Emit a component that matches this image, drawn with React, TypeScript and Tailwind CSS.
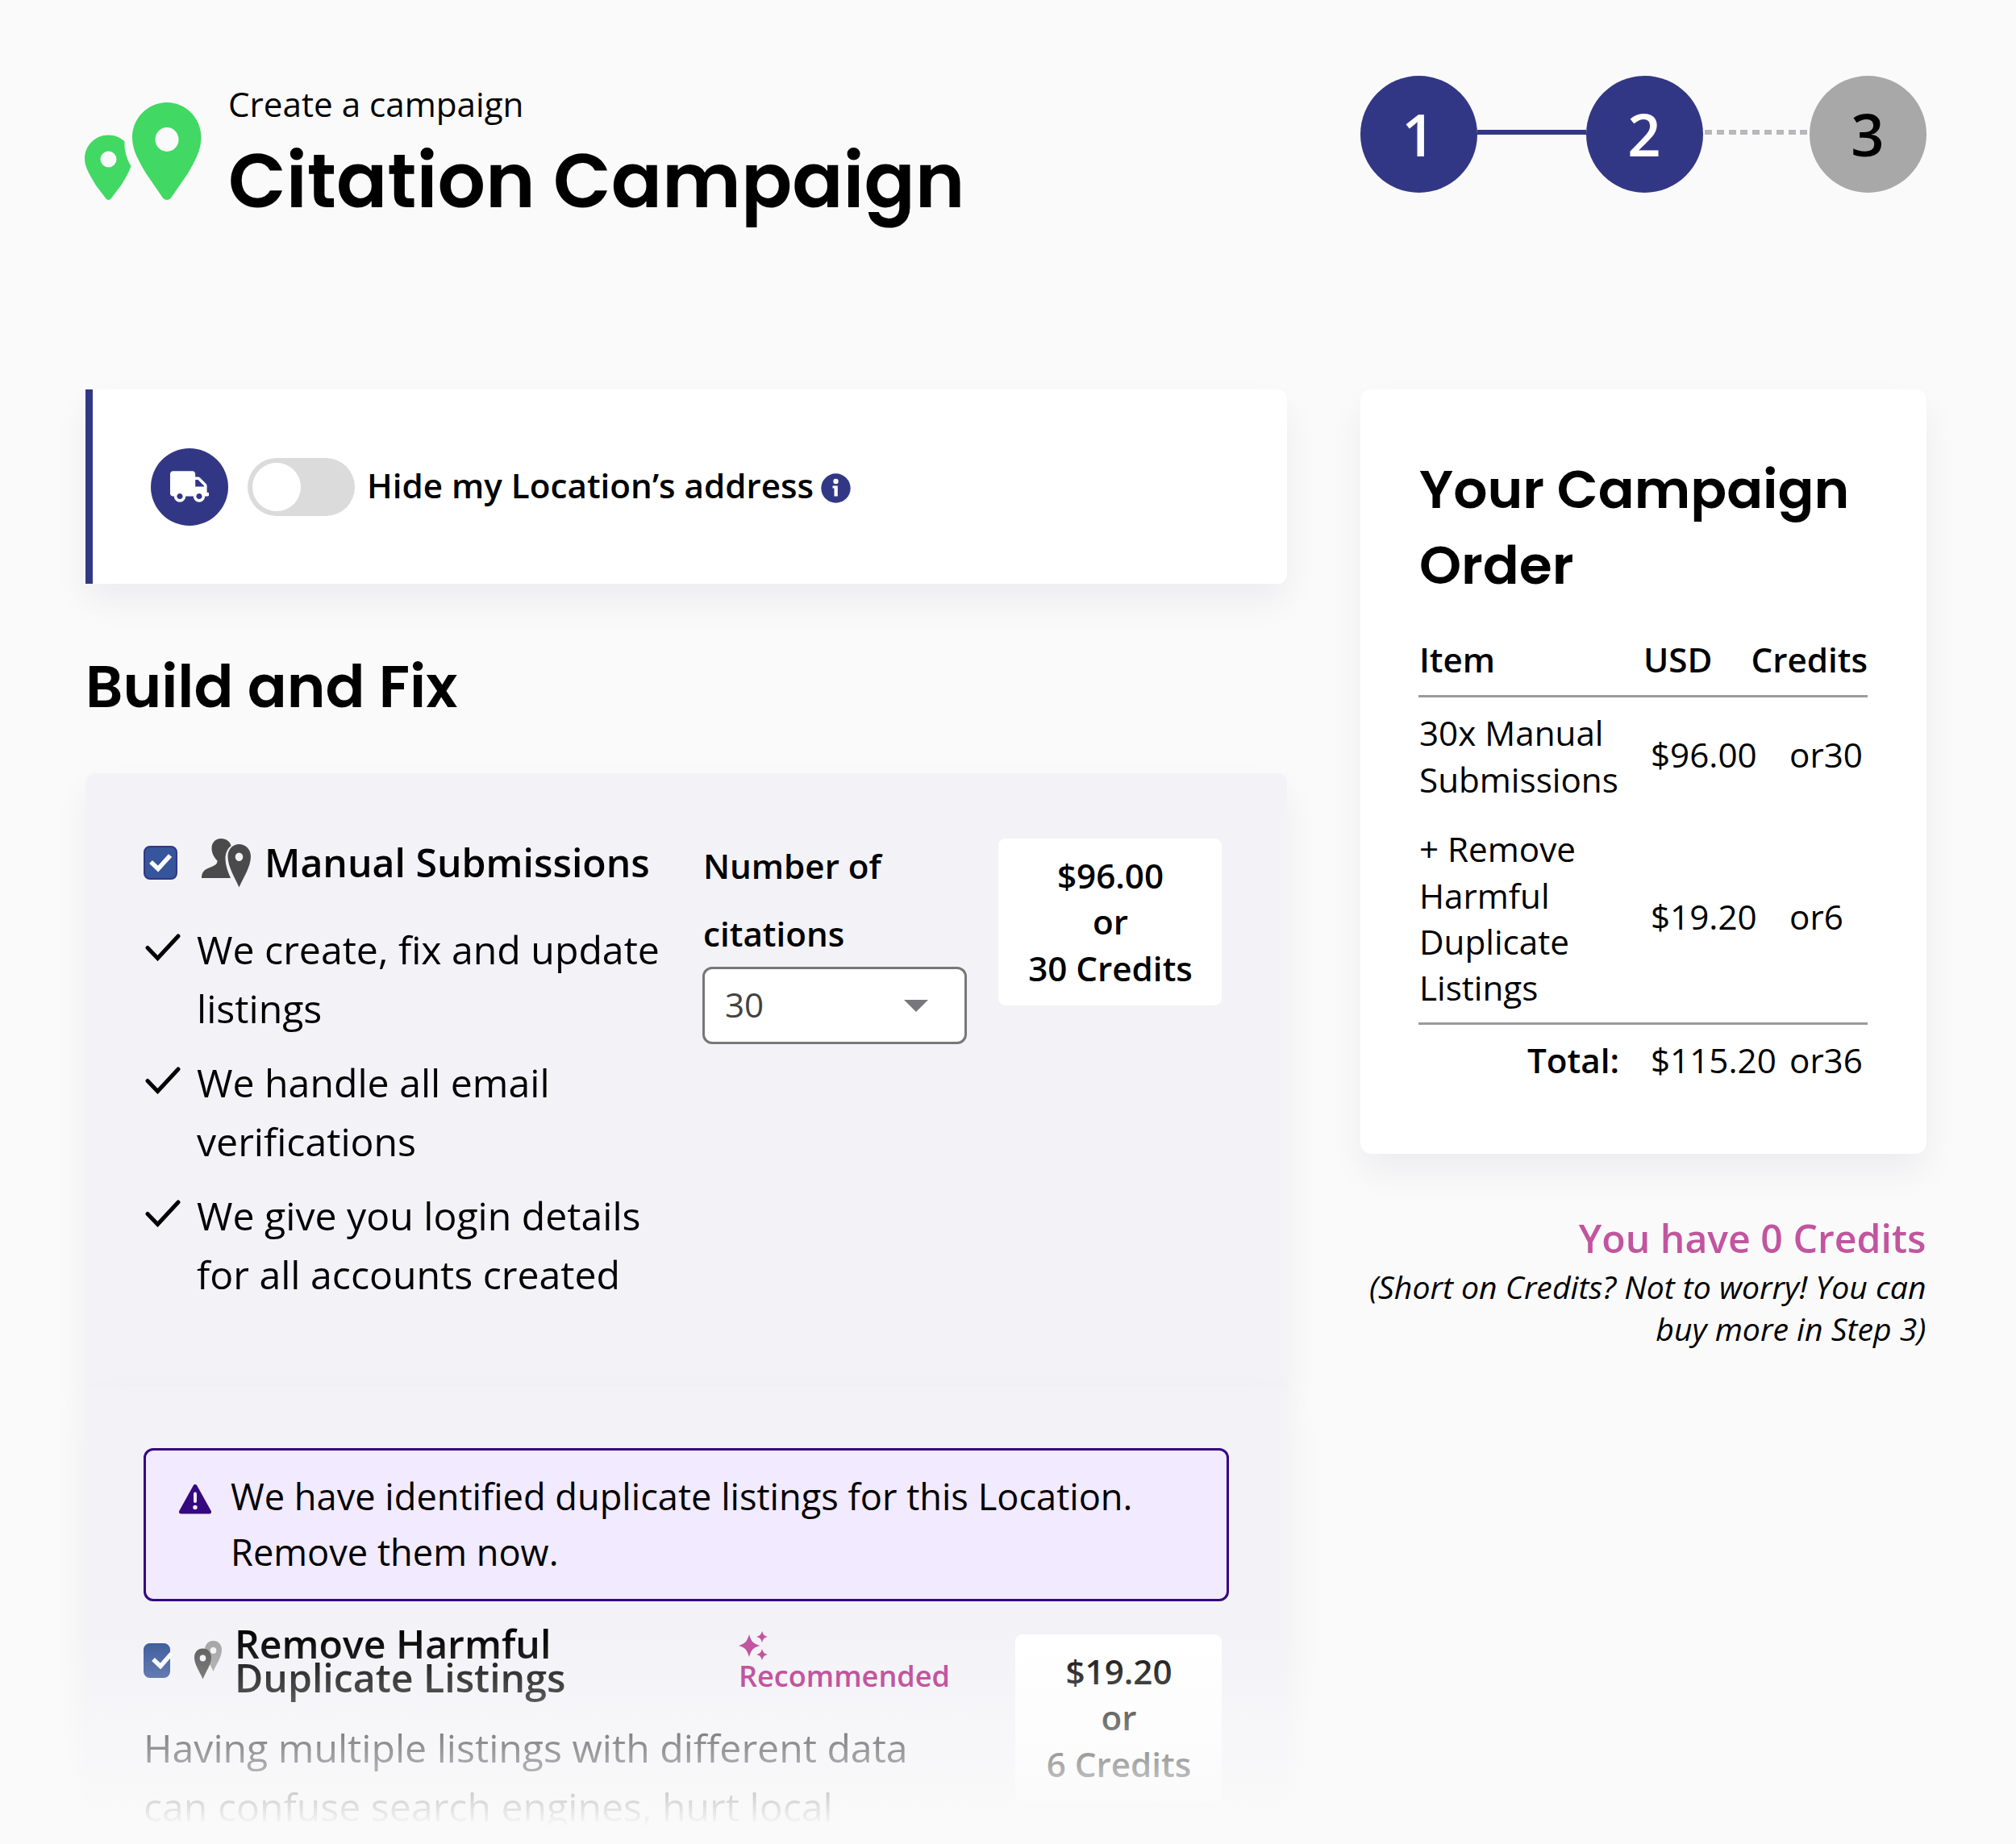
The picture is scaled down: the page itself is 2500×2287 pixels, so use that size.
import type { ReactNode } from 'react';
import { FaTruck } from 'react-icons/fa';

interface OrderLine {
  item: string;
  usd: string;
  credits: string;
}

const ORDER_LINES: OrderLine[] = [
  { item: '30x Manual Submissions', usd: '$96.00', credits: '30' },
  { item: '+ Remove Harmful Duplicate Listings', usd: '$19.20', credits: '6' },
];

const FEATURES = [
  'We create, fix and update listings',
  'We handle all email verifications',
  'We give you login details for all accounts created',
];

const headingClass = "font-['Poppins','Inter',sans-serif] font-semibold";
const shadowClass = 'shadow-[0_22px_44px_rgba(10,10,70,0.055)]';

function CampaignLogo() {
  return (
    <svg width="145" height="121" viewBox="0 0 145 121" fill="#41d963" className="shrink-0">
      <path
        fillRule="evenodd"
        d="M102 0C125.500 0 144.500 19.500 144.500 43.500C144.500 60 136 74 128 88L107 118.500C104.500 121.800 99.500 121.800 97 118.500L76 88C68 74 59 60 59 43.500C59 19.500 78.500 0 102 0ZM102 31a14.500 15 0 1 0 0 30a14.500 15 0 1 0 0-30Z"
      />
      <path
        fillRule="evenodd"
        d="M29.500 40.500C37.500 40.500 44.500 43.500 49.500 48.500C49 60 52 69.500 57.500 79C55 86.500 50 95 45 103L32.500 119.500C31 121.400 28 121.400 26.500 119.500L14 103C6 89.500 0 80 0 70C0 53.500 13 40.500 29.500 40.500ZM29.500 60.500a10 10 0 1 0 0 20a10 10 0 1 0 0-20Z"
      />
    </svg>
  );
}

function PersonPinIcon() {
  return (
    <svg width="61" height="61" viewBox="0 0 61 61" fill="#4b4a4b" className="shrink-0">
      <path d="M24 0C31 0 35.500 4 36.500 9C31.500 13 29.500 19 29.500 25C29.500 33 32.500 41 36 49H0C0 42 3 38.500 10 36C17.500 33 19.500 31.500 19.500 27.500C15 23 12.500 17.500 12.500 12C12.500 5 17 0 24 0Z" />
      <path
        fillRule="evenodd"
        d="M46.500 7C54.500 7 61 13.500 61 22C61 35 52 48 46.500 60.500C41 48 32.500 35 32.500 22C32.500 13.500 38.500 7 46.500 7ZM46.500 17.500a4.800 5.200 0 1 0 0 10.400a4.800 5.200 0 1 0 0-10.400Z"
      />
    </svg>
  );
}

function DuplicatePinsIcon() {
  return (
    <svg width="34" height="48" viewBox="0 0 34 48" className="shrink-0">
      <path
        fill="#a2a2a2"
        fillRule="evenodd"
        d="M23.500 0C29.500 0 34 4.500 34 11C34 21 27.500 28 23.500 38C19.500 28 13 21 13 11C13 4.500 17.500 0 23.500 0ZM23.500 8a3.800 4 0 1 0 0 8a3.800 4 0 1 0 0-8Z"
      />
      <path
        fill="#555554"
        fillRule="evenodd"
        d="M10.500 9.500C16.500 9.500 21 14 21 20.500C21 30 14.500 37.500 10.500 47.500C6.500 37.500 0 30 0 20.500C0 14 4.500 9.500 10.500 9.500ZM10.500 17.500a3.800 4 0 1 0 0 8a3.800 4 0 1 0 0-8Z"
      />
    </svg>
  );
}

function InfoIcon() {
  return (
    <svg width="37" height="37" viewBox="0 0 37 37" className="shrink-0">
      <circle cx="18.500" cy="18.500" r="18.200" fill="#323785" />
      <circle cx="18.500" cy="10" r="3.200" fill="#fff" />
      <path d="M14.500 15.500h6.300v13h-4.300v-10h-2z" fill="#fff" />
    </svg>
  );
}

function WarningIcon() {
  return (
    <svg width="40" height="37" viewBox="0 0 40 37" className="shrink-0">
      <path d="M20 2.500L37.500 34H2.500Z" fill="#34087f" stroke="#34087f" strokeWidth="5" strokeLinejoin="round" />
      <path d="M20 11.500v9.500" stroke="#f2eafe" strokeWidth="4" strokeLinecap="round" />
      <circle cx="20" cy="28.500" r="2.700" fill="#f2eafe" />
    </svg>
  );
}

function SparklesIcon() {
  return (
    <svg width="36" height="36" viewBox="0 0 36 36" fill="#c2559f">
      <path d="M13 4C16 13.500 17.500 15 26.500 18C17.500 21 16 22.500 13 32C10 22.500 8.500 21 0 18C8.500 15 10 13.500 13 4Z" />
      <path d="M29 0C30.800 5 31.400 5.500 36 7C31.400 8.500 30.800 9 29 14C27.200 9 26.600 8.500 22 7C26.600 5.500 27.200 5 29 0Z" />
      <path d="M29 22C30.800 27 31.400 27.500 36 29C31.400 30.500 30.800 31 29 36C27.200 31 26.600 30.500 22 29C26.600 27.500 27.200 27 29 22Z" />
    </svg>
  );
}

function StepCircle({ children, active }: { children: ReactNode; active: boolean }) {
  return (
    <div
      className={`flex size-[145px] shrink-0 items-center justify-center rounded-full text-[72.3px] font-semibold ${
        active ? 'bg-[#323785] text-white' : 'bg-[#a8a8a8] text-black'
      }`}
    >
      {children}
    </div>
  );
}

function PriceBox({ price, credits, className }: { price: string; credits: string; className: string }) {
  return (
    <div
      className={`shrink-0 rounded-[9px] bg-white pt-[17px] pb-[18px] pl-px text-center text-[42.2px] leading-[57.3px] font-semibold ${className}`}
    >
      <div>{price}</div>
      <div>or</div>
      <div>{credits} Credits</div>
    </div>
  );
}

export default function App() {
  return (
    <div className="relative h-[2287px] w-[2500px] overflow-hidden bg-[#fafafa] pr-[111.5px] pl-[106px] font-['Open_Sans',sans-serif] text-black">
      <header className="flex h-[483px] items-start justify-between pt-[94px]">
        <div className="flex">
          <div className="mt-[33px] -ml-px">
            <CampaignLogo />
          </div>
          <div className="mt-[6px] ml-[33px]">
            <p className="text-[42.2px] leading-[58px]">Create a campaign</p>
            <h1 className={`mt-[12px] text-[93.4px] leading-[110px] whitespace-nowrap ${headingClass}`}>
              Citation Campaign
            </h1>
          </div>
        </div>

        <div className="flex w-[702px] items-center">
          <StepCircle active>1</StepCircle>
          <div className="mb-[6px] h-[6px] w-[135px] bg-[#323785]" />
          <StepCircle active>2</StepCircle>
          <div className="mb-[6px] h-[6px] flex-1 bg-[repeating-linear-gradient(90deg,transparent_0_2px,#b8b8bb_2px_11px,transparent_11px_14.8px)]" />
          <StepCircle active={false}>3</StepCircle>
        </div>
      </header>

      <div className="flex justify-between">
        <main className="w-[1490px]">
          {/* Hide address */}
          <section
            className={`flex h-[241px] items-center rounded-r-[12px] border-l-[9px] border-[#323785] bg-white pl-[72px] ${shadowClass}`}
          >
            <div className="flex size-[96px] items-center justify-center rounded-full bg-[#323785]">
              <FaTruck className="h-[39px] w-[48px] text-white" />
            </div>
            <div className="ml-[24px] flex h-[72px] w-[133px] items-center rounded-full bg-[#dbdbdb] pl-[6px]">
              <div className="size-[60px] rounded-full bg-white" />
            </div>
            <span className="mb-[3px] ml-[15px] text-[42.2px] leading-[58px] font-semibold">Hide my Location’s address</span>
            <span className="mt-[4px] ml-[9px]">
              <InfoIcon />
            </span>
          </section>

          <h2 className={`mt-[83px] mb-[62px] text-[72.3px] leading-[90px] ${headingClass}`}>
            Build and Fix
          </h2>

          {/* Manual submissions */}
          <section
            className={`flex h-[761px] items-start rounded-t-[12px] bg-[#f3f2f7] pt-[81px] pr-[81px] pl-[72px] ${shadowClass}`}
          >
            <div className="w-[693px]">
              <div className="flex h-[60px] items-center">
                <div className="flex size-[42px] items-center justify-center rounded-[8px] border-2 border-[#323785] bg-[#36559a]">
                  <svg width="28" height="24" viewBox="0 0 28 24" fill="none" stroke="#fff" strokeWidth="5.500">
                    <path d="M2 11L11 19.500L26 3" />
                  </svg>
                </div>
                <div className="ml-[30px]">
                  <PersonPinIcon />
                </div>
                <span className="mb-[3px] ml-[17px] text-[48.2px] leading-[60px] font-semibold">Manual Submissions</span>
              </div>
              <ul className="mt-[41px] space-y-[20px]">
                {FEATURES.map((feature) => (
                  <li key={feature} className="flex items-start text-[48.2px] leading-[72.6px]">
                    <svg
                      width="44"
                      height="34"
                      viewBox="0 0 44 34"
                      fill="none"
                      stroke="#000"
                      strokeWidth="5"
                      strokeLinecap="round"
                      className="mt-[17px] ml-[2px] shrink-0"
                    >
                      <path d="M3 17.500L15.500 30.500L41 3" />
                    </svg>
                    <span className="ml-[20px] w-[590px]">{feature}</span>
                  </li>
                ))}
              </ul>
            </div>

            <div className="-mt-[8px] w-[328px]">
              <p className="w-[300px] pl-[1px] text-[42.2px] leading-[84px] font-semibold">Number of citations</p>
              <div className="-mt-px flex h-[96px] items-center justify-between rounded-[12px] border-[3px] border-[#77777a] bg-white pr-[45px] pl-[25px] text-[42.2px] text-[#424242]">
                <span className="-mt-[2px]">30</span>
                <svg width="30" height="15" viewBox="0 0 30 15" fill="#77777d">
                  <path d="M0 0h30L15 15z" />
                </svg>
              </div>
            </div>

            <PriceBox price="$96.00" credits="30" className="ml-auto w-[277px]" />
          </section>

          {/* Duplicate removal */}
          <section className={`h-[640px] bg-[#f3f2f7] pt-[76px] pr-[72px] pl-[72px] ${shadowClass}`}>
            <div className="flex h-[190px] items-start rounded-[12px] border-[3px] border-[#34087f] bg-[#f2eafe] pt-[22px] pl-[41px]">
              <div className="mt-[20px]">
                <WarningIcon />
              </div>
              <p className="ml-[24px] w-[1180px] text-[45.2px] leading-[69.4px]">
                We have identified duplicate listings for this Location. Remove them now.
              </p>
            </div>

            <div className="mt-[41px] flex items-start pr-[9px]">
              <div className="-mt-[11px] w-[980px]">
                <div className="flex h-[86px] items-center">
                  <div className="flex h-[43px] w-[33px] shrink-0 items-center rounded-[8px] border-2 border-[#33549a] bg-[#36559a] pl-[8px]">
                    <svg width="28" height="22" viewBox="0 0 28 22" fill="none" stroke="#fff" strokeWidth="5.500" className="shrink-0">
                      <path d="M2 10L11 18.500L24.500 3" />
                    </svg>
                  </div>
                  <div className="ml-[30px]">
                    <DuplicatePinsIcon />
                  </div>
                  <p className="ml-[16px] w-[480px] text-[48.2px] leading-[42.5px] font-semibold">
                    Remove Harmful Duplicate Listings
                  </p>
                  <div className="relative z-10 ml-auto w-[242px] self-start pt-[7px] text-[#c2559f]">
                    <SparklesIcon />
                    <p className="-mt-[5px] text-[36.1px] leading-[49px] font-semibold">Recommended</p>
                  </div>
                </div>
                <p className="mt-[29px] text-[48.2px] leading-[72.6px]">
                  Having multiple listings with different data can confuse search engines, hurt local
                </p>
              </div>
              <PriceBox price="$19.20" credits="6" className="ml-auto w-[256px]" />
            </div>
          </section>
        </main>

        <aside className="w-[702px]">
          <section className={`h-[948px] rounded-[14px] bg-white px-[72.5px] pt-[77px] ${shadowClass}`}>
            <h3 className={`pl-px text-[66.3px] leading-[93.5px] ${headingClass}`}>
              Your Campaign
              <br />
              Order
            </h3>

            <div className="mt-[42px] grid grid-cols-[278px_120px_1fr] border-b-[3px] border-[#9b9b9b] pb-[16px] pl-px text-[42.2px] leading-[57.4px] font-semibold">
              <span>Item</span>
              <span>USD</span>
              <span className="text-right">Credits</span>
            </div>

            <div className="space-y-[29px] border-b-[3px] border-[#9b9b9b] pt-[15px] pb-[14px] pl-px">
              {ORDER_LINES.map((line) => (
                <div
                  key={line.item}
                  className="grid grid-cols-[287px_172px_1fr] items-center text-[42.2px] leading-[57.4px]"
                >
                  <span className="pr-[27px]">{line.item}</span>
                  <span className="pb-[4px]">{line.usd}</span>
                  <span className="pb-[4px]">or{line.credits}</span>
                </div>
              ))}
            </div>

            <div className="grid grid-cols-[287px_172px_1fr] pt-[15px] pl-px text-[42.2px] leading-[57.4px]">
              <span className="pr-[39px] text-right font-semibold">Total:</span>
              <span>$115.20</span>
              <span>or36</span>
            </div>
          </section>

          <div className="mt-[71px] text-right">
            <p className="text-[48.2px] leading-[66px] font-semibold text-[#c2559f]">You have 0 Credits</p>
            <p className="mt-[2px] text-[39.2px] leading-[51.6px] italic">
              (Short on Credits? Not to worry! You can
              <br />
              buy more in Step 3)
            </p>
          </div>
        </aside>
      </div>

      {/* Fades the cut-off bottom of the list into the page */}
      <div className="absolute bottom-0 left-0 h-[263px] w-full bg-[linear-gradient(to_bottom,rgba(250,250,250,0)_0%,#fafafa_92%)]" />
    </div>
  );
}
